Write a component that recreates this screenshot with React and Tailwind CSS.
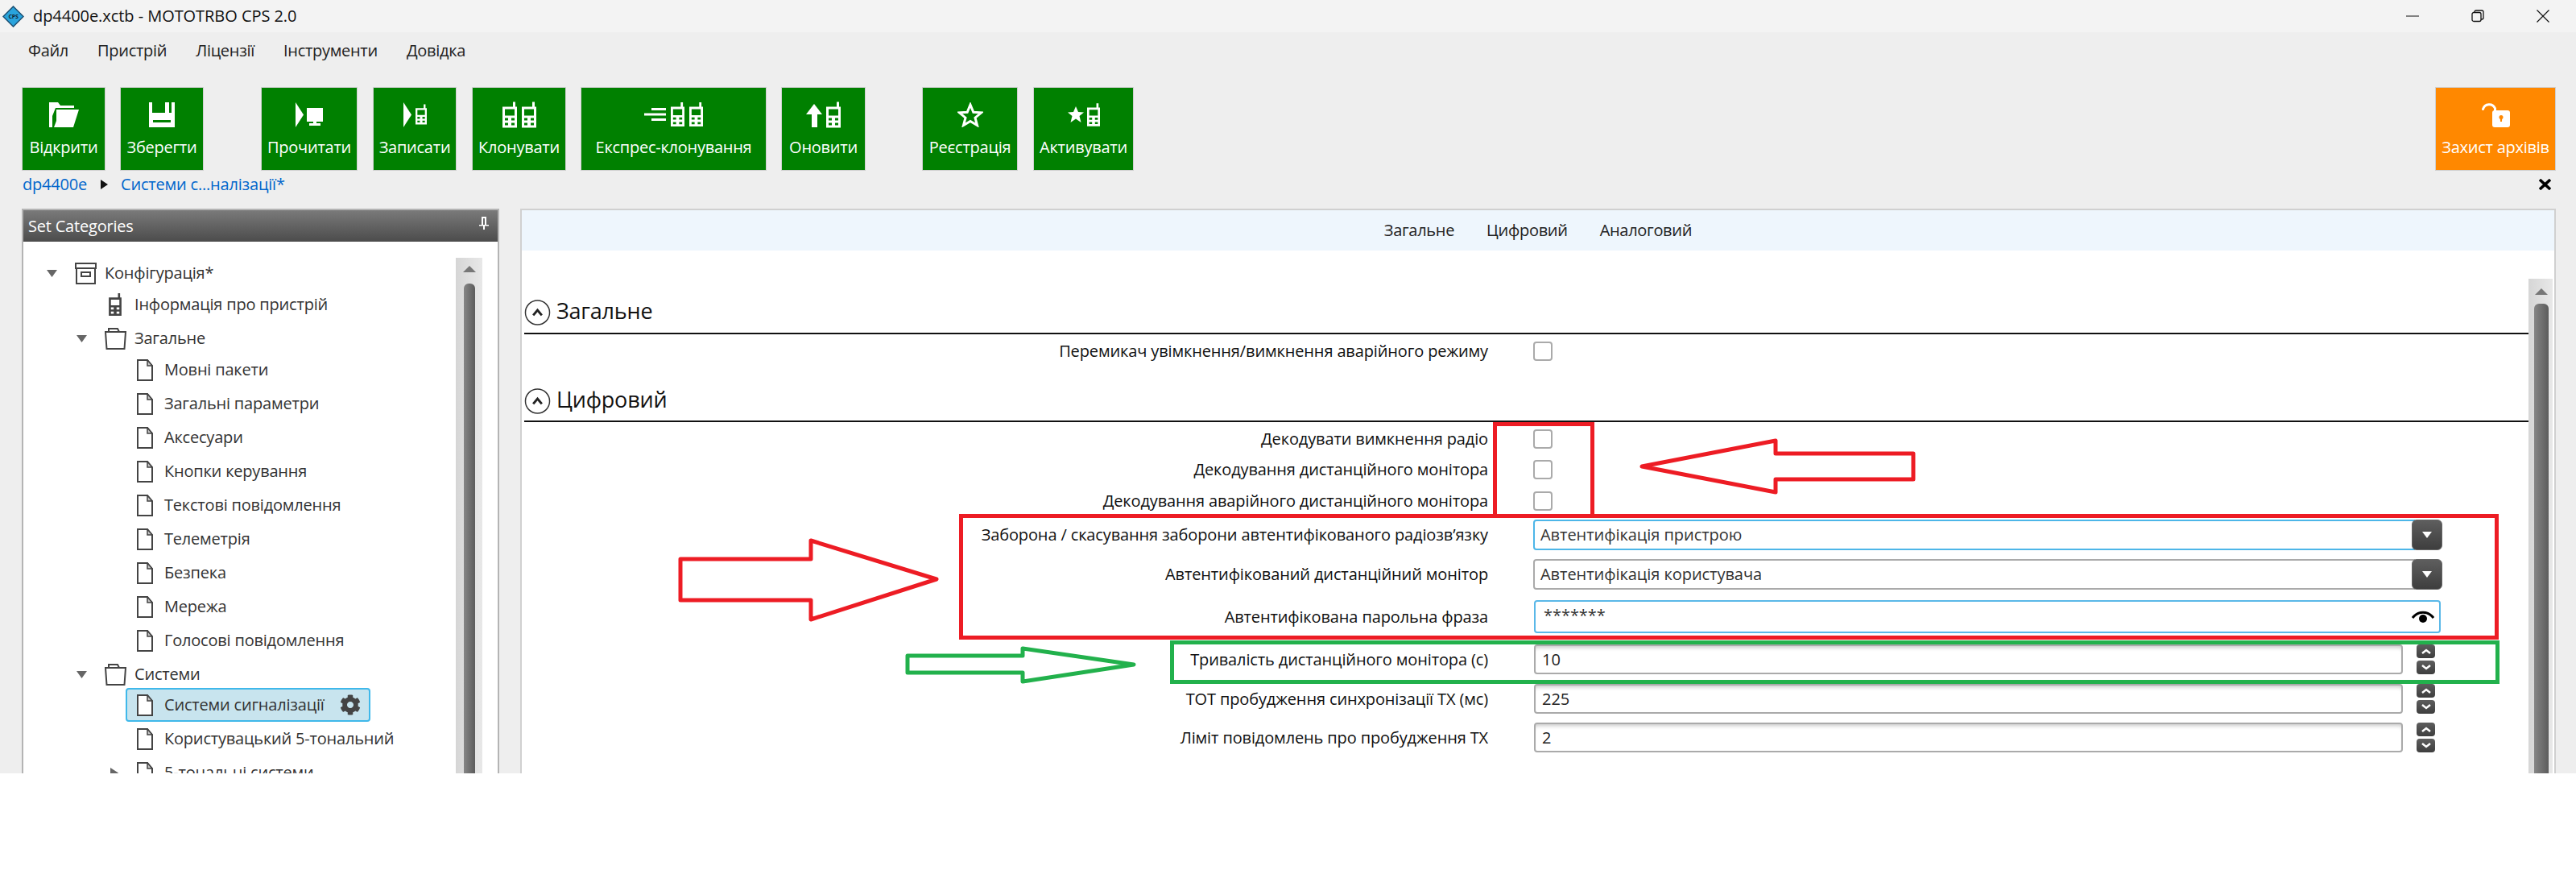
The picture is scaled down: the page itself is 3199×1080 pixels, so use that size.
import { FaCog } from 'react-icons/fa';

const Phone = ({ className }) => (
  <svg viewBox="0 0 18 32" className={className}>
    <path fill="currentColor" fillRule="evenodd" d="M13 0h3v6h2v26H0V6h13z M3 9v8h12V9z M3 20v3h4v-3z M11 20v3h4v-3z M3 26v3h4v-3z M11 26v3h4v-3z" />
  </svg>
);

const OpenIcon = () => (
  <svg viewBox="0 0 37 31" className="w-[37px] h-[31px] text-white">
    <path fill="currentColor" d="M0 0h11l3 4h17v3H8L4 17V31H0z" />
    <path fill="currentColor" d="M9 9h28l-7 22H6l3-8z" />
  </svg>
);

const SaveIcon = () => (
  <svg viewBox="0 0 32 31" className="w-[32px] h-[31px]">
    <path fill="#fff" fillRule="evenodd" d="M0 0h4v13h16V0h5v13h3V0h4v31H0z M5 22v3h22v-3z" />
  </svg>
);

const ReadIcon = () => (
  <svg viewBox="0 0 34 31" className="w-[34px] h-[31px]">
    <polygon fill="#fff" points="0,0 10,15.5 0,31" />
    <path fill="#fff" d="M14 7h20v17H26v2h5v3H17v-3h5v-2h-8z" />
  </svg>
);

const WriteIcon = () => (
  <div className="flex items-center gap-[5px]">
    <svg viewBox="0 0 10 31" className="w-[10px] h-[31px]"><polygon fill="#fff" points="0,0 10,15.5 0,31" /></svg>
    <Phone className="w-[14px] h-[28px] text-white" />
  </div>
);

const CloneIcon = () => (
  <div className="flex gap-[6px]">
    <Phone className="w-[18px] h-[33px] text-white" />
    <Phone className="w-[18px] h-[33px] text-white" />
  </div>
);

const ExpressIcon = () => (
  <div className="flex items-center gap-[6px]">
    <svg viewBox="0 0 27 16" className="w-[27px] h-[16px]">
      <path fill="#fff" d="M9 0h18v3H9zM0 6.500h27v3H0zM9 13h18v3H9z" />
    </svg>
    <Phone className="w-[17px] h-[32px] text-white" />
    <Phone className="w-[17px] h-[32px] text-white" />
  </div>
);

const UpdateIcon = () => (
  <div className="flex items-center gap-[5px]">
    <svg viewBox="0 0 20 29" className="w-[20px] h-[29px] mt-[3px]"><path fill="#fff" d="M10 0l10 13h-6v16H7V13H0z" /></svg>
    <Phone className="w-[18px] h-[33px] text-white" />
  </div>
);

const StarIcon = () => (
  <svg viewBox="0 0 32 31" className="w-[32px] h-[31px]">
    <polygon fill="none" stroke="#fff" strokeWidth="3" points="16,3 19.800,12.300 29.500,12.800 22,19.200 24.500,28.500 16,23.400 7.500,28.500 10,19.200 2.500,12.800 12.200,12.300" />
  </svg>
);

const ActivateIcon = () => (
  <div className="flex items-center gap-[4px]">
    <svg viewBox="0 0 20 20" className="w-[20px] h-[20px]">
      <polygon fill="#fff" points="10,0 13,7 20,7.500 14.500,12 16.500,20 10,15.500 3.500,20 5.500,12 0,7.500 7,7" />
    </svg>
    <Phone className="w-[16px] h-[31px] text-white" />
  </div>
);

const LockIcon = () => (
  <svg viewBox="0 0 35 31" className="w-[35px] h-[31px]">
    <path fill="none" stroke="#fff" strokeWidth="3" strokeLinecap="round" d="M1.500 8.500a8 8 0 0 1 15-1V11" />
    <rect x="13" y="10" width="22" height="21" rx="3" fill="#fff" />
    <circle cx="24" cy="18.500" r="2.500" fill="#ff8800" />
    <polygon fill="#ff8800" points="22.800,19 25.200,19 25,24 23,24" />
  </svg>
);

const toolbar = [
  { label: 'Відкрити', cls: 'w-[104px]', icon: <OpenIcon /> },
  { label: 'Зберегти', cls: 'w-[104px] ml-[18px]', icon: <SaveIcon /> },
  { label: 'Прочитати', cls: 'w-[120px] ml-[71px]', icon: <ReadIcon /> },
  { label: 'Записати', cls: 'w-[104px] ml-[19px]', icon: <WriteIcon /> },
  { label: 'Клонувати', cls: 'w-[117px] ml-[19px]', icon: <CloneIcon /> },
  { label: 'Експрес-клонування', cls: 'w-[231px] ml-[18px]', icon: <ExpressIcon /> },
  { label: 'Оновити', cls: 'w-[105px] ml-[18px]', icon: <UpdateIcon /> },
  { label: 'Реєстрація', cls: 'w-[119px] ml-[70px]', icon: <StarIcon /> },
  { label: 'Активувати', cls: 'w-[125px] ml-[19px]', icon: <ActivateIcon /> },
];

function ToolButton({ label, cls, icon, color = 'bg-[#008000]' }) {
  return (
    <div className={`h-[104px] ${color} border border-[#d0d0d0] flex flex-col items-center text-white ${cls}`}>
      <div className="h-[50px] mt-[8px] flex items-center justify-center">{icon}</div>
      <span className="mt-[1px] text-[20px] leading-[30px] tracking-[-0.25px] whitespace-nowrap">{label}</span>
    </div>
  );
}

const Caret = ({ open = true }) => (
  <svg viewBox="0 0 13 13" className="w-[13px] h-[13px]">
    <polygon fill="#666" points={open ? '0,2 13,2 6.500,11' : '2,0 12,6.500 2,13'} />
  </svg>
);

const DocIcon = ({ stacked }) => (
  <svg viewBox="0 0 20 27" className="w-[20px] h-[27px] shrink-0">
    {stacked && <path fill="none" stroke="#444" strokeWidth="2" d="M4 1H1v25" />}
    <path fill="#fff" stroke="#444" strokeWidth="2" d="M1 1h12l6 7v18H1z" />
    <path fill="#c8c8c8" stroke="#444" strokeWidth="1.500" d="M13 1v7h6z" />
  </svg>
);

const ArchiveIcon = () => (
  <svg viewBox="0 0 27 27" className="w-[27px] h-[27px]">
    <path fill="none" stroke="#444" strokeWidth="2" d="M1 1h25v6H1z M2 7v19h23V7 M8 12h11v5H8z" />
  </svg>
);

const FolderIcon = () => (
  <svg viewBox="0 0 27 27" className="w-[27px] h-[27px]">
    <path fill="none" stroke="#444" strokeWidth="2" d="M5 5V1h11l2 4 M1 5h25l-1.500 21H2.500z" />
  </svg>
);

const tree = [
  { label: 'Конфігурація*', pl: 'pl-[29px]', caret: 'open', icon: <ArchiveIcon />, slot: 'w-[37px]' },
  { label: 'Інформація про пристрій', pl: 'pl-[66px]', mt: '-mt-[3px]', icon: <Phone className="w-[16px] h-[28px] ml-[5px] text-[#444]" />, slot: 'w-[37px]' },
  { label: 'Загальне', pl: 'pl-[66px]', caret: 'open', icon: <FolderIcon />, slot: 'w-[37px]' },
  { label: 'Мовні пакети', pl: 'pl-[106px]', mt: '-mt-[3px]', icon: <DocIcon />, slot: 'w-[34px]' },
  { label: 'Загальні параметри', pl: 'pl-[106px]', icon: <DocIcon />, slot: 'w-[34px]' },
  { label: 'Аксесуари', pl: 'pl-[106px]', icon: <DocIcon />, slot: 'w-[34px]' },
  { label: 'Кнопки керування', pl: 'pl-[106px]', icon: <DocIcon />, slot: 'w-[34px]' },
  { label: 'Текстові повідомлення', pl: 'pl-[106px]', icon: <DocIcon />, slot: 'w-[34px]' },
  { label: 'Телеметрія', pl: 'pl-[106px]', icon: <DocIcon />, slot: 'w-[34px]' },
  { label: 'Безпека', pl: 'pl-[106px]', icon: <DocIcon />, slot: 'w-[34px]' },
  { label: 'Мережа', pl: 'pl-[106px]', icon: <DocIcon />, slot: 'w-[34px]' },
  { label: 'Голосові повідомлення', pl: 'pl-[106px]', icon: <DocIcon />, slot: 'w-[34px]' },
  { label: 'Системи', pl: 'pl-[66px]', caret: 'open', icon: <FolderIcon />, slot: 'w-[37px]' },
  { label: 'Системи сигналізації', selected: true, mt: '-mt-[4px]' },
  { label: 'Користувацький 5-тональний', pl: 'pl-[106px]', icon: <DocIcon />, slot: 'w-[34px]' },
  { label: '5-тональні системи', pl: 'pl-[106px]', caret: 'closed', icon: <DocIcon stacked />, slot: 'w-[34px]' },
];

function TreeRow({ item }) {
  if (item.selected) {
    return (
      <div className={`h-[42px] shrink-0 pl-[127px] ${item.mt}`}>
        <div className="w-[304px] h-[42px] pl-[12px] flex items-center bg-[#c8e4ee] border-2 border-[#3fb8ea] rounded-[4px]">
          <div className="w-[34px]"><DocIcon /></div>
          <span className="flex-1 whitespace-nowrap">{item.label}</span>
          <FaCog className="w-[26px] h-[26px] text-[#444] mr-[10px]" />
        </div>
      </div>
    );
  }
  return (
    <div className={`h-[42px] shrink-0 flex items-center ${item.pl} ${item.mt || ''}`}>
      <div className="w-[35px]">{item.caret && <Caret open={item.caret === 'open'} />}</div>
      <div className={`${item.slot} flex`}>{item.icon}</div>
      <span className="whitespace-nowrap">{item.label}</span>
    </div>
  );
}

const CircleUp = () => (
  <svg viewBox="0 0 33 33" className="w-[33px] h-[32px] shrink-0">
    <circle cx="16.500" cy="16.500" r="15.500" fill="none" stroke="#333" strokeWidth="1.500" />
    <path fill="none" stroke="#222" strokeWidth="3" d="M11 20l5.500-6.500L22 20" />
  </svg>
);

const SectionHead = ({ title, cls }) => (
  <div className={`flex items-start gap-[7px] border-b-2 border-[#111] ${cls}`}>
    <CircleUp />
    <span className="-mt-[2px] text-[27px] leading-[32px] text-[#111]">{title}</span>
  </div>
);

const Row = ({ label, mt, h, children }) => (
  <div className={`flex items-center ${mt} ${h}`}>
    <div className="w-[1197px] text-right whitespace-nowrap text-[#111] tracking-[-0.13px]">{label}</div>
    <div className="ml-[57px] flex items-center tracking-[-0.05px]">{children}</div>
  </div>
);

const Check = () => <div className="w-[24px] h-[24px] ml-[-1px] border-2 border-[#aaaaaa] rounded-[4px] bg-white" />;

const TriangleBtn = () => (
  <div className="w-[38px] h-[38px] -ml-[4px] rounded-[6px] bg-gradient-to-b from-[#5e5e5e] to-[#3e3e3e] border border-[#666] flex items-center justify-center">
    <svg viewBox="0 0 12 8" className="w-[12px] h-[8px]"><polygon fill="#fff" points="0,0 12,0 6,8" /></svg>
  </div>
);

const SelectBox = ({ value, focused }) => (
  <div className="flex items-center -ml-[1px]">
    <div className={`w-[1095px] h-[38px] pl-[7px] flex items-center border-2 rounded-l-[4px] text-[#333] ${focused ? 'border-[#4db6e8]' : 'border-[#aaaaaa]'}`}>
      {value}
    </div>
    <TriangleBtn />
  </div>
);

const Spin = ({ up }) => (
  <div className="w-[23px] h-[17px] rounded-[4px] bg-gradient-to-b from-[#5e5e5e] to-[#3e3e3e] flex items-center justify-center">
    <svg viewBox="0 0 12 7" className="w-[12px] h-[7px]">
      <path fill="none" stroke="#fff" strokeWidth="2.500" d={up ? 'M1 6l5-4 5 4' : 'M1 1l5 4 5-4'} />
    </svg>
  </div>
);

const NumberBox = ({ value }) => (
  <div className="flex items-center">
    <div className="w-[1079px] h-[37px] pl-[8px] flex items-center border-2 border-[#aaaaaa] rounded-[4px] shadow-[inset_0_5px_5px_-3px_rgba(0,0,0,0.22)] text-[#222]">
      {value}
    </div>
    <div className="ml-[17px] flex flex-col gap-[3px]">
      <Spin up />
      <Spin />
    </div>
  </div>
);

const Eye = () => (
  <svg viewBox="0 0 28 17" className="w-[28px] h-[17px]">
    <path fill="none" stroke="#000" strokeWidth="3" d="M1 10C8 1 20 1 27 10" />
    <circle cx="14" cy="11" r="5" fill="#000" />
  </svg>
);

const Scrollbar = ({ cls, arrowCls, thumbCls }) => (
  <div className={`shrink-0 flex flex-col bg-gradient-to-r from-[#d6d6d6] to-[#e8e8e8] ${cls}`}>
    <svg viewBox="0 0 16 8" className={`w-[16px] h-[8px] shrink-0 ${arrowCls}`}><polygon fill="#777" points="8,0 16,8 0,8" /></svg>
    <div className={`flex-1 rounded-t-[6px] bg-gradient-to-r from-[#868686] to-[#5c5c5c] ${thumbCls}`} />
  </div>
);

export default function App() {
  return (
    <div className="relative w-[3199px] h-[1080px] bg-white overflow-hidden font-['Open_Sans',sans-serif] text-[20px] leading-[28px] tracking-[-0.2px]">
      <div className="h-[960px] bg-[#eeeeee] flex flex-col overflow-hidden">
        {/* title bar */}
        <div className="h-[40px] shrink-0 bg-[#f3f3f3] flex items-center text-[#111]">
          <svg viewBox="0 0 27 27" className="w-[27px] h-[27px] ml-[3px]">
            <polygon fill="#29a3dc" stroke="#1b4f72" strokeWidth="1.500" points="13.500,1 26,13.500 13.500,26 1,13.500" />
            <text x="13.500" y="16" textAnchor="middle" fontSize="7" fontWeight="700" fill="#123">CPS</text>
          </svg>
          <span className="ml-[11px] tracking-[-0.05px]">dp4400e.xctb - MOTOTRBO CPS 2.0</span>
          <div className="ml-auto pr-[33px] flex items-center gap-[65px]">
            <svg viewBox="0 0 16 16" className="w-[16px] h-[16px]"><path stroke="#111" strokeWidth="1" d="M0 8h16" /></svg>
            <svg viewBox="0 0 16 16" className="w-[16px] h-[16px]">
              <path fill="none" stroke="#111" strokeWidth="1.300" d="M1 5.500a2 2 0 0 1 2-2h7a2 2 0 0 1 2 2v7a2 2 0 0 1-2 2H3a2 2 0 0 1-2-2z M4 3.500V3a2 2 0 0 1 2-2h7a2 2 0 0 1 2 2v7a2 2 0 0 1-2 2h-1" />
            </svg>
            <svg viewBox="0 0 16 16" className="w-[16px] h-[16px]"><path stroke="#111" strokeWidth="1.200" d="M0.500 0.500l15 15M15.500 0.500l-15 15" /></svg>
          </div>
        </div>

        {/* menu */}
        <div className="h-[46px] shrink-0 pl-[35px] flex items-center gap-[36px] text-[#222] tracking-[-0.3px]">
          <span>Файл</span>
          <span>Пристрій</span>
          <span>Ліцензії</span>
          <span>Інструменти</span>
          <span>Довідка</span>
        </div>

        {/* toolbar */}
        <div className="mt-[22px] pl-[27px] pr-[25px] flex shrink-0">
          {toolbar.map(b => <ToolButton key={b.label} {...b} />)}
          <ToolButton label="Захист архівів" cls="w-[150px] ml-auto" icon={<LockIcon />} color="bg-[#ff8800]" />
        </div>

        {/* breadcrumb */}
        <div className="h-[34px] shrink-0 pl-[28px] pr-[31px] flex items-center text-[#0066cc]">
          <span>dp4400e</span>
          <svg viewBox="0 0 9 12" className="w-[9px] h-[12px] ml-[17px]"><polygon fill="#111" points="0,0 9,6 0,12" /></svg>
          <span className="ml-[16px]">Системи с...налізації*</span>
          <svg viewBox="0 0 15 14" className="w-[15px] h-[14px] ml-auto"><path stroke="#000" strokeWidth="3.500" d="M1 1l13 12M14 1L1 13" /></svg>
        </div>

        {/* main */}
        <div className="mt-[13px] flex-1 min-h-0 flex pl-[27px] pr-[25px] gap-[26px]">
          <div className="w-[593px] shrink-0 bg-white border-x-2 border-t-2 border-[#b4b4b4] flex flex-col">
            <div className="h-[39px] shrink-0 pl-[6px] pr-[11px] flex items-center justify-between text-white bg-gradient-to-b from-[#7a7a7a] to-[#4c4c4c]">
              <span>Set Categories</span>
              <svg viewBox="0 0 12 16" className="w-[12px] h-[16px] -mt-[8px]">
                <path fill="#fff" fillRule="evenodd" d="M3 0h6v10h3v1.500H7V16H5v-4.500H0V10h3z M5 2v8h2V2z" />
              </svg>
            </div>
            <div className="flex-1 min-h-0 flex pr-[19px]">
              <div className="flex-1 min-w-0 pt-[18px] flex flex-col text-[#333] overflow-hidden">
                {tree.map(item => <TreeRow key={item.label} item={item} />)}
              </div>
              <Scrollbar cls="w-[33px] mt-[20px] pt-[10px]" arrowCls="ml-[9px]" thumbCls="w-[14px] ml-[10px] mt-[14px]" />
            </div>
          </div>

          <div className="flex-1 min-w-0 bg-white border-x-2 border-t-2 border-[#d0d0d0] flex flex-col">
            <div className="h-[50px] shrink-0 bg-[#eef6fd] flex items-center justify-center gap-[40px] text-[#222] tracking-[-0.3px]">
              <span>Загальне</span>
              <span>Цифровий</span>
              <span>Аналоговий</span>
            </div>
            <div className="flex-1 min-h-0 flex">
              <div className="flex-1 min-w-0 pl-[3px] pt-[61px] flex flex-col">
                <SectionHead title="Загальне" cls="h-[43px]" />
                <Row label="Перемикач увімкнення/вимкнення аварійного режиму" mt="mt-[9px]" h="h-[24px]"><Check /></Row>
                <SectionHead title="Цифровий" cls="h-[42px] mt-[34px]" />
                <Row label="Декодувати вимкнення радіо" mt="mt-[9px]" h="h-[24px]"><Check /></Row>
                <Row label="Декодування дистанційного монітора" mt="mt-[14px]" h="h-[24px]"><Check /></Row>
                <Row label="Декодування аварійного дистанційного монітора" mt="mt-[15px]" h="h-[24px]"><Check /></Row>
                <Row label="Заборона / скасування заборони автентифікованого радіозв’язку" mt="mt-[11px]" h="h-[38px]">
                  <SelectBox value="Автентифікація пристрою" focused />
                </Row>
                <Row label="Автентифікований дистанційний монітор" mt="mt-[11px]" h="h-[38px]">
                  <SelectBox value="Автентифікація користувача" />
                </Row>
                <Row label="Автентифікована парольна фраза" mt="mt-[13px]" h="h-[41px]">
                  <div className="w-[1126px] h-[41px] pl-[10px] pr-[6px] flex items-center justify-between border-2 border-[#5ab8e8] rounded-[4px] text-[#333]">
                    <span className="-mt-[4px]">*******</span>
                    <Eye />
                  </div>
                </Row>
                <Row label="Тривалість дистанційного монітора (с)" mt="mt-[14px]" h="h-[37px]"><NumberBox value="10" /></Row>
                <Row label="ТОТ пробудження синхронізації ТХ (мс)" mt="mt-[12px]" h="h-[37px]"><NumberBox value="225" /></Row>
                <Row label="Ліміт повідомлень про пробудження ТХ" mt="mt-[11px]" h="h-[37px]"><NumberBox value="2" /></Row>
              </div>
              <Scrollbar cls="w-[30px] mr-[2px] mt-[35px] pt-[12px]" arrowCls="ml-[8px]" thumbCls="w-[18px] ml-[7px] mt-[11px]" />
            </div>
          </div>
        </div>
      </div>

      {/* red and green annotations drawn over the screenshot */}
      <div className="absolute left-[1854px] top-[524px] w-[126px] h-[119px] border-[5px] border-[#ed1c24]" />
      <div className="absolute left-[1191px] top-[638px] w-[1912px] h-[156px] border-[5px] border-[#ed1c24]" />
      <div className="absolute left-[1453px] top-[795px] w-[1651px] h-[54px] border-[5px] border-[#22b14c]" />
      <svg className="absolute left-0 top-0 w-[3199px] h-[960px] pointer-events-none" viewBox="0 0 3199 960">
        <polygon fill="none" stroke="#ed1c24" strokeWidth="5" strokeLinejoin="round" points="845,694 1007,694 1007,671 1163,719 1007,769 1007,745 845,745" />
        <polygon fill="none" stroke="#ed1c24" strokeWidth="5" strokeLinejoin="round" points="2039,579 2205,547 2205,563 2376,563 2376,595 2205,595 2205,611" />
        <polygon fill="none" stroke="#22b14c" strokeWidth="5" strokeLinejoin="round" points="1127,814 1270,814 1270,805 1408,825 1270,846 1270,835 1127,835" />
      </svg>
    </div>
  );
}
